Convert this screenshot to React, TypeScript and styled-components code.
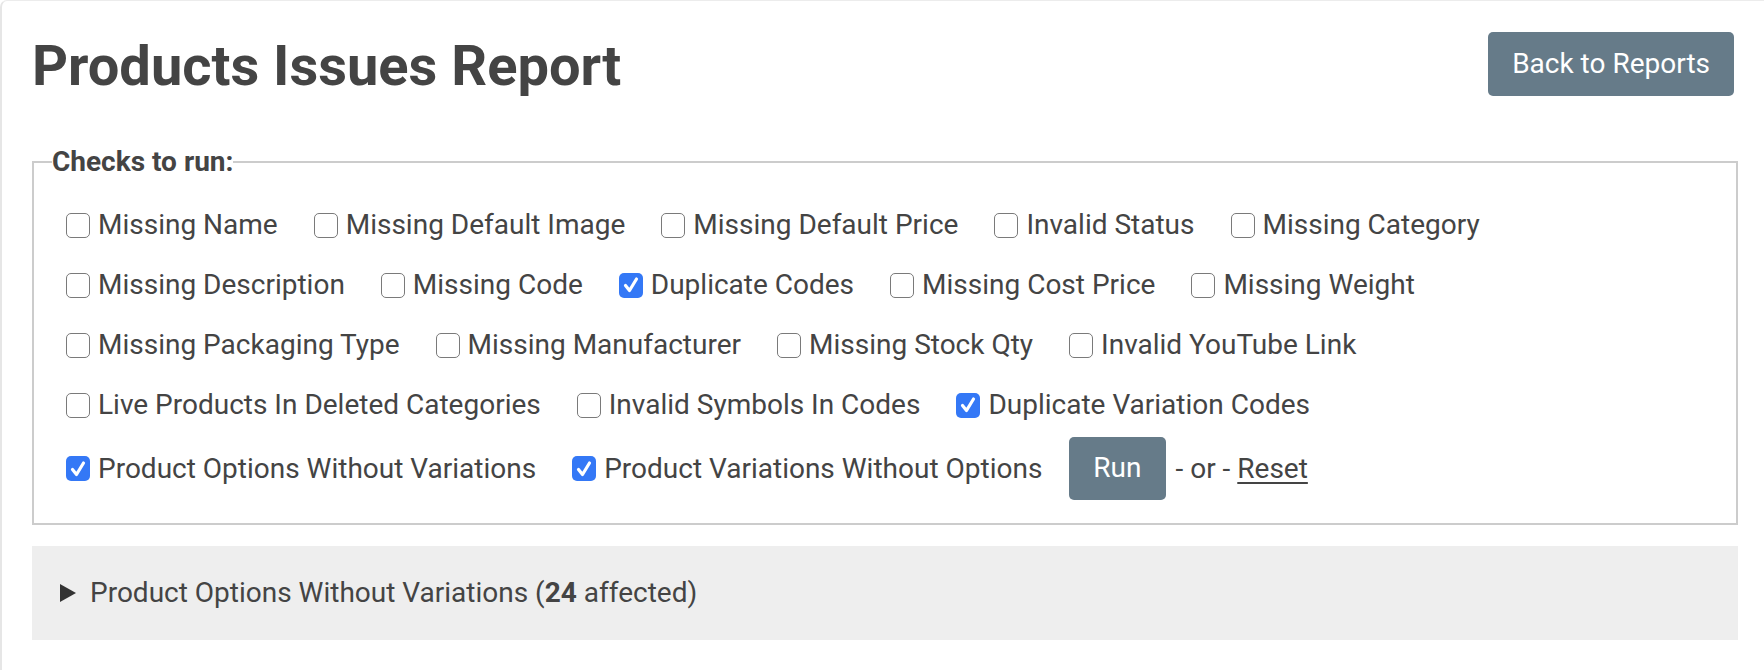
import { FC } from "react";
import styled, { createGlobalStyle } from "styled-components";

const GlobalStyle = createGlobalStyle`
  html, body {
    margin: 0;
    padding: 0;
    background: #fff;
    overflow: hidden;
  }

  body {
    font-family: Roboto, "Liberation Sans", Arial, sans-serif;
    color: #444;
    font-size: 28px;
    line-height: 1.5;
  }
`;

interface Check {
  label: string;
  checked?: boolean;
}

const checkRows: Check[][] = [
  [
    { label: "Missing Name" },
    { label: "Missing Default Image" },
    { label: "Missing Default Price" },
    { label: "Invalid Status" },
    { label: "Missing Category" },
  ],
  [
    { label: "Missing Description" },
    { label: "Missing Code" },
    { label: "Duplicate Codes", checked: true },
    { label: "Missing Cost Price" },
    { label: "Missing Weight" },
  ],
  [
    { label: "Missing Packaging Type" },
    { label: "Missing Manufacturer" },
    { label: "Missing Stock Qty" },
    { label: "Invalid YouTube Link" },
  ],
  [
    { label: "Live Products In Deleted Categories" },
    { label: "Invalid Symbols In Codes" },
    { label: "Duplicate Variation Codes", checked: true },
  ],
];

const lastRow: Check[] = [
  { label: "Product Options Without Variations", checked: true },
  { label: "Product Variations Without Options", checked: true },
];

const Page = styled.div`
  min-height: 670px;
  box-sizing: border-box;
  border-left: 2px solid #e6e6e6;
  border-top: 1px solid #ececec;
  border-top-left-radius: 7px;
  padding: 31px 26px 0 30px;
`;

const Header = styled.div`
  display: flex;
  justify-content: space-between;
  align-items: flex-start;
`;

const Title = styled.h1`
  margin: 1px 0 0;
  font-size: 56px;
  line-height: 67px;
  font-weight: 700;
  color: #444;
`;

const Button = styled.button`
  font-family: inherit;
  font-size: 28px;
  line-height: 42px;
  color: #fff;
  background: #667b89;
  border: none;
  border-radius: 5px;
  padding: 10px 25px 11px;
  cursor: pointer;
`;

const BackButton = styled(Button)`
  margin-right: 4px;
  padding: 11px 24px;
`;

const Checks = styled.fieldset`
  margin: 41px 0 0;
  padding: 12px 18px 23px;
  border: 2px solid #ccc;
  min-width: 0;
`;

const Legend = styled.legend`
  padding: 0;
  font-size: 28px;
  line-height: 42px;
  font-weight: 700;
  color: #444;
`;

const CheckRow = styled.div<{ $last?: boolean }>`
  display: flex;
  align-items: center;
  gap: 0 36px;
  padding-left: 14px;
  min-height: 60px;
  padding-top: ${({ $last }) => ($last ? "2px" : "0")};
`;

const CheckItem = styled.label`
  display: flex;
  align-items: center;
  gap: 8px;
  white-space: nowrap;
  cursor: pointer;
`;

const Box = styled.span<{ $checked?: boolean }>`
  box-sizing: border-box;
  width: 24px;
  height: 25px;
  flex: none;
  border-radius: 5px;
  border: ${({ $checked }) =>
    $checked ? "none" : "1.75px solid #7a7a7a"};
  background: ${({ $checked }) => ($checked ? "#3478f6" : "#fff")};
  display: flex;
  align-items: center;
  justify-content: center;

  svg {
    display: block;
  }
`;

const Actions = styled.div`
  display: flex;
  align-items: center;
  gap: 10px;
  margin-left: -9px;
  white-space: nowrap;
`;

const RunButton = styled(Button)`
  padding: 10px 24px 11px;
`;

const ResetLink = styled.a`
  color: #444;
  text-decoration: underline;
  text-underline-offset: 4px;
  text-decoration-thickness: 2px;
`;

const Result = styled.div`
  margin-top: 21px;
  background: #eee;
  padding: 26px 28px;
  display: flex;
  align-items: center;
  gap: 14px;
`;

const Arrow = styled.span`
  width: 0;
  height: 0;
  border-top: 9px solid transparent;
  border-bottom: 9px solid transparent;
  border-left: 16px solid #333;
`;

const CheckBox: FC<Check> = ({ label, checked }) => (
  <CheckItem>
    <Box $checked={checked}>
      {checked && (
        <svg width="16" height="18" viewBox="0 0 16 18">
          <path
            d="M2.5 9.5 L6.5 14.5 L13.5 3"
            fill="none"
            stroke="#fff"
            strokeWidth="3.2"
            strokeLinecap="round"
            strokeLinejoin="round"
          />
        </svg>
      )}
    </Box>
    {label}
  </CheckItem>
);

const App: FC = () => (
  <>
    <GlobalStyle />
    <Page>
      <Header>
        <Title>Products Issues Report</Title>
        <BackButton>Back to Reports</BackButton>
      </Header>

      <Checks>
        <Legend>Checks to run:</Legend>
        {checkRows.map((row, i) => (
          <CheckRow key={i}>
            {row.map((c) => (
              <CheckBox key={c.label} {...c} />
            ))}
          </CheckRow>
        ))}
        <CheckRow $last>
          {lastRow.map((c) => (
            <CheckBox key={c.label} {...c} />
          ))}
          <Actions>
            <RunButton>Run</RunButton>
            <span>
              - or - <ResetLink href="#">Reset</ResetLink>
            </span>
          </Actions>
        </CheckRow>
      </Checks>

      <Result>
        <Arrow />
        <span>
          Product Options Without Variations (<b>24</b> affected)
        </span>
      </Result>
    </Page>
  </>
);

export default App;
